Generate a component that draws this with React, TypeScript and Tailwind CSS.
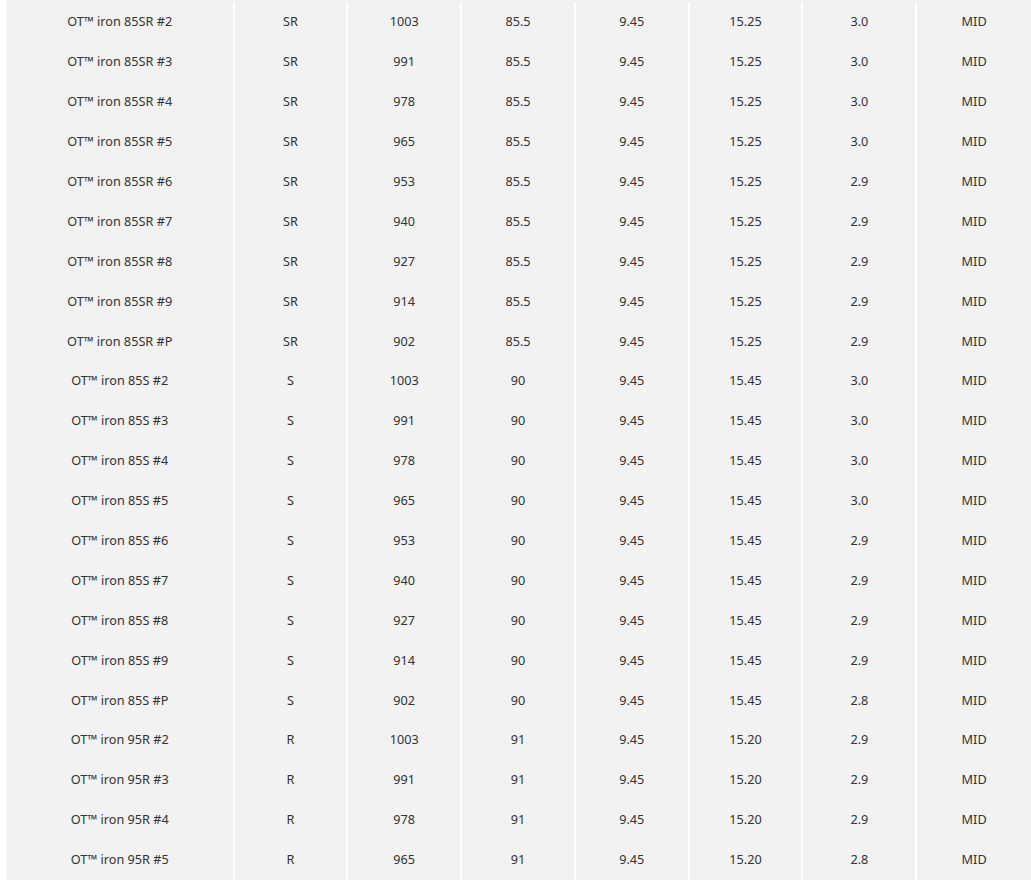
import React from "react";

type Row = [string, string, string, string, string, string, string, string];

const rows: Row[] = [
  ["OT™ iron 85SR #2", "SR", "1003", "85.5", "9.45", "15.25", "3.0", "MID"],
  ["OT™ iron 85SR #3", "SR", "991", "85.5", "9.45", "15.25", "3.0", "MID"],
  ["OT™ iron 85SR #4", "SR", "978", "85.5", "9.45", "15.25", "3.0", "MID"],
  ["OT™ iron 85SR #5", "SR", "965", "85.5", "9.45", "15.25", "3.0", "MID"],
  ["OT™ iron 85SR #6", "SR", "953", "85.5", "9.45", "15.25", "2.9", "MID"],
  ["OT™ iron 85SR #7", "SR", "940", "85.5", "9.45", "15.25", "2.9", "MID"],
  ["OT™ iron 85SR #8", "SR", "927", "85.5", "9.45", "15.25", "2.9", "MID"],
  ["OT™ iron 85SR #9", "SR", "914", "85.5", "9.45", "15.25", "2.9", "MID"],
  ["OT™ iron 85SR #P", "SR", "902", "85.5", "9.45", "15.25", "2.9", "MID"],
  ["OT™ iron 85S #2", "S", "1003", "90", "9.45", "15.45", "3.0", "MID"],
  ["OT™ iron 85S #3", "S", "991", "90", "9.45", "15.45", "3.0", "MID"],
  ["OT™ iron 85S #4", "S", "978", "90", "9.45", "15.45", "3.0", "MID"],
  ["OT™ iron 85S #5", "S", "965", "90", "9.45", "15.45", "3.0", "MID"],
  ["OT™ iron 85S #6", "S", "953", "90", "9.45", "15.45", "2.9", "MID"],
  ["OT™ iron 85S #7", "S", "940", "90", "9.45", "15.45", "2.9", "MID"],
  ["OT™ iron 85S #8", "S", "927", "90", "9.45", "15.45", "2.9", "MID"],
  ["OT™ iron 85S #9", "S", "914", "90", "9.45", "15.45", "2.9", "MID"],
  ["OT™ iron 85S #P", "S", "902", "90", "9.45", "15.45", "2.8", "MID"],
  ["OT™ iron 95R #2", "R", "1003", "91", "9.45", "15.20", "2.9", "MID"],
  ["OT™ iron 95R #3", "R", "991", "91", "9.45", "15.20", "2.9", "MID"],
  ["OT™ iron 95R #4", "R", "978", "91", "9.45", "15.20", "2.9", "MID"],
  ["OT™ iron 95R #5", "R", "965", "91", "9.45", "15.20", "2.8", "MID"],
];

export default function App() {
  return (
    <div className="h-[880px] w-[1031px] overflow-hidden bg-white pl-[7px] font-['Noto_Sans',sans-serif] text-[12.7px] text-[#333]">
      <div className="flex h-full w-[1024px] bg-[#f2f2f2] pt-[2px]">
        <div className="flex w-full flex-col">
          {rows.map((r, i) => (
            <div key={i} className="flex h-[39.9px] shrink-0">
              <div className="flex w-[226px] items-center justify-center">{r[0]}</div>
              {r.slice(1).map((c, j) => (
                <div
                  key={j}
                  className={`flex items-center justify-center border-l-2 border-white ${j === 6 ? "w-[116px]" : "w-[114px]"}`}
                >
                  {c}
                </div>
              ))}
            </div>
          ))}
        </div>
      </div>
    </div>
  );
}
